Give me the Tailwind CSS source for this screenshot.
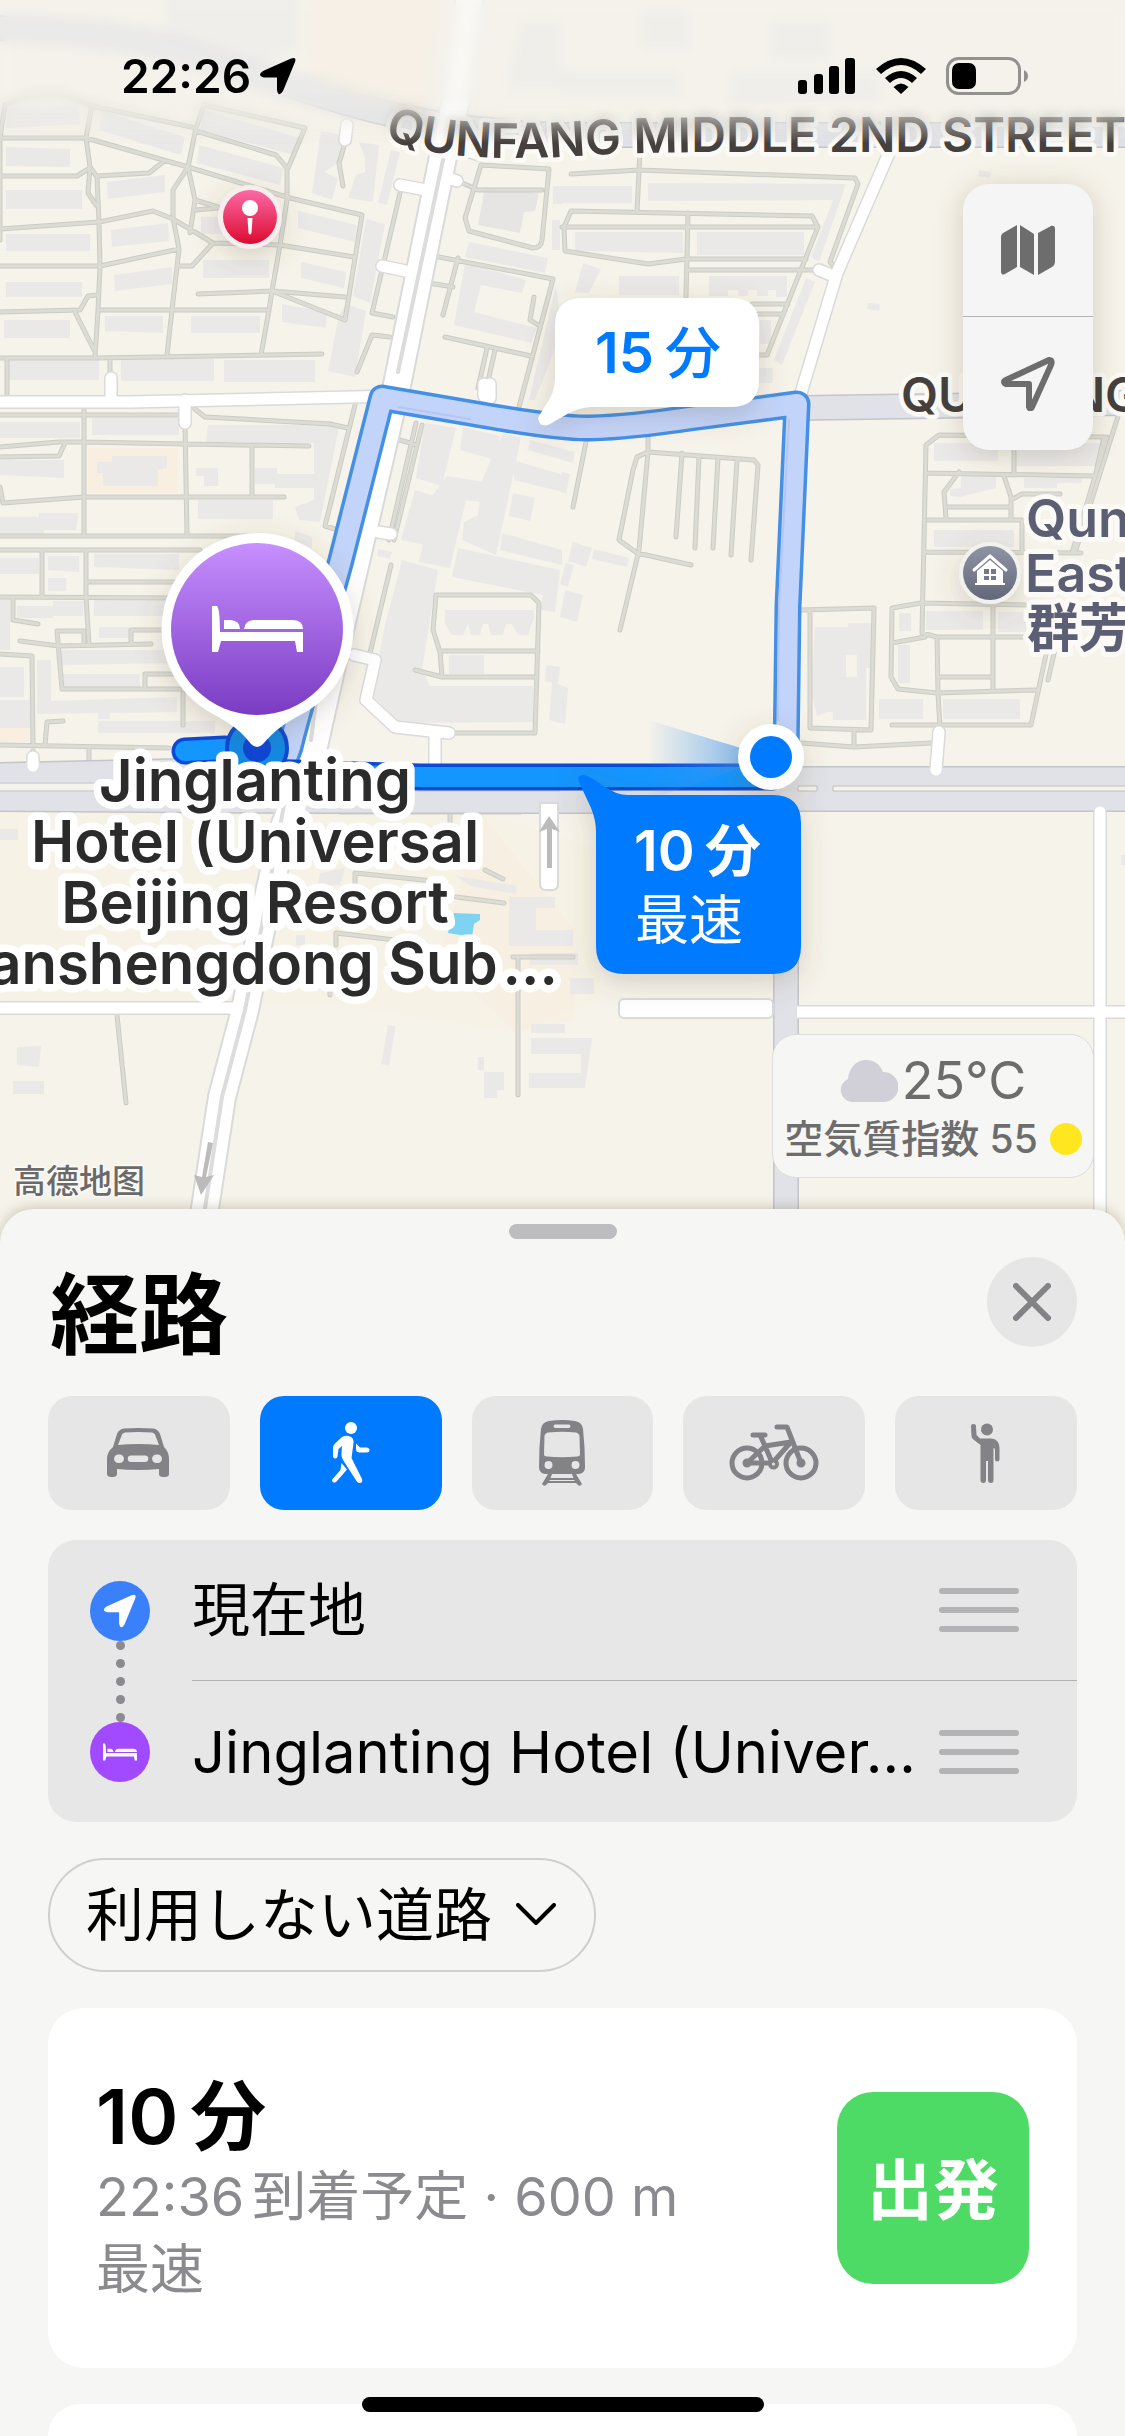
<!DOCTYPE html>
<html lang="ja">
<head>
<meta charset="utf-8">
<meta name="viewport" content="width=device-width, initial-scale=1">
<title>経路</title>
<script src="https://cdn.jsdelivr.net/npm/@tailwindcss/browser@4"></script>
</head>
<body class="bg-[#f6f6f4] font-['Inter','Noto_Sans_CJK_JP',sans-serif] text-black">
<main class="relative flex h-screen flex-col overflow-hidden">

  <!-- Map -->
  <section aria-label="地図" class="relative min-h-0 flex-1 bg-[#f6f3ea]">
    <svg class="absolute inset-x-0 top-0 h-auto w-full" viewBox="0 0 1125 1260" fill="none">
      <defs>
        <linearGradient id="purple" x1="0" y1="0" x2="0" y2="1"><stop offset="0" stop-color="#c78fff"/><stop offset="1" stop-color="#7a3bc2"/></linearGradient>
        <linearGradient id="pink" x1="0" y1="0" x2="0" y2="1"><stop offset="0" stop-color="#fc69a6"/><stop offset="1" stop-color="#dc0b30"/></linearGradient>
        <linearGradient id="slate" x1="0" y1="0" x2="0" y2="1"><stop offset="0" stop-color="#8f94a5"/><stop offset="1" stop-color="#63677a"/></linearGradient>
        <linearGradient id="beam" x1="0" y1="0" x2="1" y2="0"><stop offset="0" stop-color="#3d93ee" stop-opacity="0"/><stop offset="1" stop-color="#3d93ee" stop-opacity=".75"/></linearGradient>
        <filter id="shade" x="-40%" y="-40%" width="180%" height="180%"><feDropShadow dx="0" dy="8" stdDeviation="14" flood-color="#5a5030" flood-opacity=".22"/></filter>
        <path id="street" d="M384 138 C440 160 500 159 560 157 C620 153 650 153 700 152 L1300 152"/>
        <path id="lanes" d="M0 138H86L188 167L290 198L362 215L345 320L272 291M345 320M198 294L272 291L345 297M92 105L86 138L90 167L97 177L99 223L100 267L98 310L95 357M5 105L30 95L60 93L92 106L196 128L204 105L305 128L288 168M5 105L0 138V240M196 128L188 167L173 190V218L179 249L172 310L167 355M196 131L276 155L287 168V200L280 245L272 291L269 310L261 355M0 176H77L90 168M97 176L149 173L163 162M90 168L88 193L96 205M0 229L99 222L153 211L173 219L213 243L280 245L354 257M188 167L195 200L218 207M195 200L190 233M195 210L218 208M213 243L192 266H179M0 266H100L179 249M0 312L80 310L88 296L97 295M74 310L95 352M98 310H269M0 358H95L322 354M7 358V396M110 358V375M345 143L339 163L343 186M400 193L372 313L393 317M390 337L372 335L357 372M481 165L549 169L542 240Q541 248 533 248L469 231L465 218ZM460 182L478 190H542M434 256L553 279L519 407M458 258L443 315M429 283L453 287M445 337L531 356M487 348L478 388M495 350L486 390M534 297L530 320L538 325
          M571 174L639 170L855 178L858 184L830 262L837 270M640 150L637 212M564 227L571 211L812 216L818 227L767 355H758M562 227H818M564 227L565 251L648 264L686 259H806M688 213L686 297M688 270H820M752 304H788M758 314H783
          M0 415H180M84 410V535M185 427L187 535M0 447L59 442H84L185 444L309 446M0 457L59 456L65 443M0 487L3 503L84 497H284M252 447V495M0 536H251M0 550H200M355 405L325 526L338 530M190 405L205 417L330 424L348 428M42 550V596M86 550V597L89 645M0 597L180 598M86 582H180M13 598V620L38 624M20 641L59 646L151 644M84 643V631H57L62 689H180M145 689V674H180M131 644V630H170M0 654L32 656L33 750M63 721L47 722L45 745M0 745L169 748M89 748V765M183 693V725
          M416 423L389 540M422 425L394 540M393 438L417 445M391 565L370 653M452 733H535L539 603L531 595H436L433 630L440 652L442 677L415 670M440 651H538M442 677H537
          M587 437L573 507M648 437V452L639 550L620 630M648 452L637 457L633 470L619 540L637 553L691 565M648 452L754 460L758 465L751 560M682 453L676 537M699 457L695 548M718 458L713 548M737 460L731 555
          M801 610L874 608L871 730L810 728V611M854 730V747M801 743L854 747L932 743M1095 477L1104 437L939 435L926 445L922 633L937 637L938 693L940 728M926 473L1093 476M1014 450V473M928 520H1022M926 552L1081 553M1025 605L921 603L892 608L891 677L898 689L937 693L1036 690M1048 645L1031 725H892M937 637H1025M993 605V688M939 677H993M892 643L925 637M1119 413L1075 553M1107 437L1072 553M959 472L944 492L946 518M948 507H1011M1004 476L1011 497V520M1011 500L1022 494H1060M1022 520V552M1056 645L1048 680
          M340 812L520 812L535 803M450 812V822M355 885V873L443 882M485 870L503 879M456 897L504 903M336 945V933L395 940M117 1015L126 1103M513 957H573M518 957V1095M330 985V995"/>
        <path id="whites" d="M0 402H130L395 396M111 378V400M185 400V423M400 185L426 190M442 176L457 181M382 266L406 271M490 384V398M484 384V396M889 153L837 273L801 393M819 270L836 277M480 155L458 148M347 125L345 140M354 655L375 660L366 700L395 727L449 733M435 733V766M391 534L378 532M33 757V766M939 732L936 770M0 1008H240M797 1012H1125M1100 812V1260"/>
        <path id="avenue" d="M470 -5L456 100L443 157L397 385L340 630L312 755L283 830L262 925L245 1010L222 1097L204 1215L200 1260"/>
        <path id="grays" d="M-5 28Q120 32 180 50L330 98Q440 132 560 135H1130M800 408L1130 403M-5 775L180 771M-5 799L300 801H780M770 779H1130M770 799H1130M786 750V1260"/>
      </defs>

      <rect width="1125" height="1260" fill="#f6f3ea"/>
      <!-- land use -->
      <g fill="#f8efe0">
        <path d="M310 -5H440L425 125L310 95Z"/>
        <rect x="88" y="448" width="90" height="45"/>
        <path d="M0 812H480L600 850V1000L515 1032L340 1005L0 1000Z" opacity=".4"/>
        <path d="M480 812L575 930V1020L515 1032L440 960Z" opacity=".7"/>
        <rect x="0" y="728" width="30" height="14"/>
      </g>
      <!-- buildings -->
      <g fill="#ebe9e8">
        <path d="M165 -5H300V50L230 70L165 30ZM520 20H562V90H505ZM640 10H690V50H640ZM770 20H830V60H770ZM560 70H680V95H560ZM730 70H880V100L730 104Z" opacity=".8"/>
        <path d="M6 147L70 149V167L6 166ZM6 190H82V209H6ZM6 234H90V251H6ZM6 282H82V297H6ZM4 320H70V338H4ZM6 359H99V380H6ZM121 359H214V381H121ZM224 360H315V382H224ZM105 316H163V333L105 331ZM191 316H260V333H191ZM203 260H269V278H203ZM282 304L327 312L326 328L282 322ZM8 108L78 106L80 124L6 128ZM102 111L185 137L181 155L99 130ZM204 110L300 138L294 155L200 130ZM199 145L284 168L280 185L197 163ZM107 182L165 175V192L108 199ZM111 230L168 223L169 241L112 247ZM114 275L172 267V284L115 291ZM298 211L357 225L355 242L298 228ZM301 262L346 272L344 288L301 278ZM201 217H236V234H201ZM321 131L349 136L343 160L324 172L338 178L332 200L312 193ZM359 142L379 145L373 202L348 198L356 175L365 172V158ZM391 150L400 152L387 205L378 203ZM366 219L385 224L370 303L353 296ZM346 304L366 311L355 377L328 371L339 315Z"/>
        <path d="M469 242L548 258L545 273L465 257ZM465 263L526 280L522 293L481 285L474 312L537 328L531 343L454 325ZM553 186H562V204H553ZM552 220H560V250H552ZM556 285L562 330L535 400H529Z"/>
        <path d="M562 186H632V203H562ZM648 183L846 184L819 262L811 257L833 200L648 201ZM575 232H683V253L575 251ZM697 232H804V255H697ZM619 276H679V295H619ZM709 276H787V297H776V290H768V296H757V290H748V296H738V290H728V296H709ZM806 278L815 282L782 365L774 360ZM760 320H771V344H760ZM759 368H773V383H759ZM583 263L601 269L589 293H575ZM979 170L991 172L990 178L978 176ZM868 303L880 304L879 311L867 309Z"/>
        <path d="M0 422H80V438H0ZM92 418H179V435H92ZM208 425H314L339 427L320 522L299 520L295 507L314 500V443L206 442ZM0 460H64V478L0 475ZM112 456H167V468L158 470V486H103V473H97V462H112ZM198 500H273V519H198ZM196 468H218V486H204V476H196ZM255 468H277V474H314V488H275V484H255ZM0 517H39V513H79L76 530H44V534H0ZM0 558H39V574H0ZM48 556H79V572L48 570ZM48 578H66V591H48ZM94 554H179V570L94 567ZM94 600H180V616H94ZM17 606H53V601H83V616H53V618H17ZM0 598H10V650H0ZM99 627H129V638H99ZM60 650H180V663L60 665ZM60 674H140V687H60ZM37 660H51V701L177 697V712L110 713V719H98V713L37 714ZM0 667H24V697H0ZM0 700H32V728H0ZM98 721H215V733H98ZM295 531L312 537V548L295 543Z"/>
        <path d="M425 423L456 428L442 486L416 478ZM463 427L500 436L495 460L460 450ZM503 433L521 438L496 555L462 540L464 522L478 515L482 480ZM447 476L484 482L480 502L466 500L450 568L419 562L433 495ZM415 490L435 496L425 545L401 540ZM513 460L563 475V492L514 480ZM513 493L535 498L530 521L509 516ZM502 533L562 550V565L500 550ZM458 548L560 570L555 612L541 610L543 595L452 577ZM530 440L575 452L573 463L528 450ZM402 560L438 570L422 670L430 686H533V722L400 723L372 695L385 625ZM378 549L392 552L390 559L377 556ZM445 610H534V618L528 635H518L512 624H506L503 635H491L488 624H483L480 635H471L468 624L463 635H451L445 622ZM449 655H484V674H449ZM546 665L560 667L558 684L545 681ZM552 682L568 688L565 724L549 720Z"/>
        <path d="M562 472L570 474L566 494L560 492ZM573 542L592 548L586 567L568 561ZM594 549L629 558L627 567L592 559ZM566 563L574 565L568 587L560 584ZM565 590L583 595L577 622L560 617ZM815 627H848V623H871V668H866V720H833V712H827L817 716L811 690ZM934 443H998V461H934ZM1016 443H1100V466H1016ZM961 476H996V488L960 497L950 496V489L961 488ZM1024 478H1082V483H1057V488H1024ZM934 530H1014V547H934ZM899 613H911V631H899ZM926 611H983V630H926ZM998 612H1028V632H998ZM898 645H910V683H898ZM879 699H923V719H879ZM943 699H1020V719H943Z"/>
        <path d="M17 1047L41 1046L39 1067L17 1065ZM13 1081H44V1094H13ZM388 1025L396 1026L389 1066L381 1064ZM478 1057H484V1070H478ZM484 1072H504V1090H497V1098H484ZM531 1024H565V1033H531ZM531 1038H592L585 1088H529V1073H581V1054H531ZM509 897H555V908H536V930H573V946H509ZM320 873L345 868L340 885H318ZM456 876L517 886L516 894L470 886ZM555 930H572V945H555ZM530 953H578V965H530ZM570 978H594V994H570ZM0 829H18V840H0ZM296 935H305V945H296ZM1121 855H1125V865H1121Z"/>
        <path d="M846 655H857V677H846Z" fill="#f6f3ea"/>
      </g>
      <path d="M485 187L539 193L535 211L524 212L520 233L478 225Z" fill="#e7e5e4"/>
      <path d="M452 913L480 914V920L474 924L472 937L448 933Z" fill="#7fd3f2"/>

      <!-- roads: casing then surface -->
      <g stroke-linejoin="round" stroke-linecap="round">
        <use href="#lanes" stroke="#cbccc5" stroke-width="5"/>
        <use href="#lanes" stroke="#dcdcd5" stroke-width="3"/>
        <use href="#grays" stroke="#c3c5ca" stroke-width="26"/>
        <use href="#whites" stroke="#dadada" stroke-width="14"/>
        <use href="#avenue" stroke="#dadada" stroke-width="30"/>
        <use href="#grays" stroke="#e1e2e7" stroke-width="23"/>
        <use href="#whites" stroke="#fff" stroke-width="11"/>
        <use href="#avenue" stroke="#fff" stroke-width="26"/>
        <path d="M443 160L398 372M316 700L311 740M284 805L262 925L245 1010L222 1097L204 1215" stroke="#dcdcdc" stroke-width="4"/>
        <rect x="619" y="999" width="154" height="19" rx="5" fill="#fff" stroke="#dadada" stroke-width="2"/>
        <path d="M775 995H797V1022H775Z" fill="#e1e2e7"/>
        <path d="M540 803H558V884Q558 890 552 890H546Q540 890 540 884Z" fill="#fff" stroke="#dadada" stroke-width="2"/>
      </g>
      <path d="M798 786H817V791H798ZM833 786H1130V791H833Z" fill="#f6f3ea" stroke="#c0c0c0"/>
      <path d="M0 787H560" stroke="#f6f3ea" stroke-width="7"/><path d="M0 783H560M0 791H560" stroke="#c3c5ca"/>
      <path d="M549 816L560 832L552 829V868H547V829L539 832Z" fill="#bbb"/>
      <path d="M208 1142L213 1143L206 1177L214 1175L201 1195L194 1175L202 1177Z" fill="#bbb"/>

      <!-- alternative route -->
      <g stroke-linejoin="round" stroke-linecap="round">
        <path d="M284 762Q290 750 293 735L341 560L382 398L470 413Q560 429 590 428Q630 427 690 418L797 404L788 607L786 757" stroke="#4490e6" stroke-width="27"/>
        <path d="M284 762Q290 750 293 735L341 560L382 398L470 413Q560 429 590 428Q630 427 690 418L797 404L788 607L786 757" stroke="#c3d4fb" stroke-width="20"/>
        <path d="M398 407L470 419M789 420L779 607L778 720" stroke="#b5c6f0" stroke-width="2"/>
        <!-- fastest route -->
        <path d="M185 751L225 749L262 772L420 777H772" stroke="#0b49d6" stroke-width="27"/>
        <path d="M185 751L225 749L262 772L420 777H772" stroke="#1496ff" stroke-width="20"/>
        <path d="M771 757L648 720V800Z" fill="url(#beam)"/>
      </g>
      <circle cx="257" cy="748" r="30" fill="#118ae9" stroke="#0b49d6" stroke-width="4"/>
      <circle cx="257" cy="748" r="14" fill="#0a45dc"/>

      <!-- current position -->
      <circle cx="771" cy="757" r="33" fill="#fff" filter="url(#shade)"/>
      <circle cx="771" cy="757" r="21" fill="#007aff"/>

      <!-- route callouts -->
      <g filter="url(#shade)">
        <path d="M583 298H731Q759 298 759 326V379Q759 407 731 407H590Q578 407 562 417L548 425Q539 427 538 418Q540 414 546 405Q555 392 555 380V326Q555 298 583 298Z" fill="#fff"/>
        <path d="M579 782Q576 775 584 775Q590 776 602 785Q616 795 628 795H773Q801 795 801 823V946Q801 974 773 974H624Q596 974 596 946V832Q596 820 591 808Z" fill="#007aff"/>
      </g>
      <g font-family="Inter, 'Noto Sans CJK JP', sans-serif">
        <text y="373" font-size="56" font-weight="600" fill="#007aff"><tspan x="595">15</tspan><tspan x="665" font-weight="500">分</tspan></text>
        <g fill="#fff">
          <text y="871" font-size="56" font-weight="600"><tspan x="634">10</tspan><tspan x="705">分</tspan></text>
          <text x="635" y="940" font-size="54">最速</text>
        </g>
      </g>

      <!-- place markers -->
      <g filter="url(#shade)"><path d="M257 533A96 96 0 0 1 302 714C284 723 272 733 263 744Q257 750 251 744C243 733 231 723 213 714A96 96 0 0 1 257 533Z" fill="#fff"/></g>
      <circle cx="257" cy="629" r="86" fill="url(#purple)"/>
      <g fill="#fff"><path id="bed" d="M212 606H217Q219 609 219.500 617L220 632H303V652H297L295 641H221L218 652H212ZM224 620H231Q240 621 240 629H224ZM253 620H292Q303 620 303 629H244Q245 621 253 620Z"/></g>
      <circle cx="250" cy="217" r="32" fill="#f6eeee" filter="url(#shade)"/>
      <circle cx="250" cy="217" r="27" fill="url(#pink)"/>
      <circle cx="250" cy="208" r="8" fill="#fff"/><path d="M247.500 218H252.500L251.500 233Q250 236 248.500 233Z" fill="#fff"/>
      <circle cx="990" cy="573" r="31" fill="#f3f1ee" filter="url(#shade)"/>
      <circle cx="990" cy="573" r="27" fill="url(#slate)"/>
      <path d="M974 570L990 556L1006 570" stroke="#fff" stroke-width="3" stroke-linecap="round"/>
      <path d="M990 560L1003 571V583H1005V585H975V583H977V571Z" fill="#fff"/>
      <path d="M984 569H989V574H984ZM991 569H996V574H991ZM984 576H989V580H984ZM991 576H996V580H991Z" fill="#75798b"/>

      <!-- map labels; the hotel's lines go bottom-up so that no halo covers a descender -->
      <g font-family="Inter, 'Noto Sans CJK JP', sans-serif" stroke="#fbfaf6" stroke-linejoin="round" paint-order="stroke">
        <text font-size="48" font-weight="600" fill="#45403d" stroke-width="9"><textPath href="#street">QUNFANG MIDDLE 2ND STREET</textPath></text>
        <text x="901" y="412" font-size="48" font-weight="600" fill="#45403d" stroke-width="9">QUNFANG</text>
        <g font-size="52" font-weight="600" fill="#5c5f74" stroke-width="10">
          <text x="1027" y="647">群芳</text><text x="1025" y="592">East</text><text x="1026" y="537">Qun</text>
        </g>
        <g font-size="58" font-weight="600" fill="#2b2b2b" stroke="#fff" stroke-width="15" text-anchor="middle">
          <text x="558" y="984" text-anchor="end">anshengdong Sub&#8202;…</text><text x="255" y="923">Beijing Resort</text><text x="255" y="862">Hotel (Universal</text><text x="255" y="801">Jinglanting</text>
        </g>
        <text x="13" y="1193" font-size="33" font-weight="500" fill="#6a6a6a" stroke-width="3">高德地图</text>
      </g>
    </svg>

    <!-- blurred strip behind the status bar -->
    <div class="absolute inset-x-0 top-0 h-36 bg-[#f4f2ec]/50 backdrop-blur-[6px] [mask-image:linear-gradient(to_bottom,black_65%,transparent)]"></div>

    <div class="relative flex items-center justify-between pt-[46px] pr-[96px] pl-[121px]">
      <div class="flex h-[60px] items-center gap-2">
        <time class="text-[46px] leading-[60px] font-semibold">22:26</time>
        <svg class="h-[38px] w-[38px]" viewBox="0 0 38 38" role="img" aria-label="位置情報"><path d="M32 1.500Q38-.5 36 5L24 34Q19.500 41 18 33V20.500H5Q-2.500 18.500 4 14Z"/></svg>
      </div>
      <div class="flex items-center gap-5">
        <svg class="h-9 w-[58px]" viewBox="0 0 58 36" role="img" aria-label="電波"><rect y="22" width="9" height="14" rx="3"/><rect x="16" y="16" width="9" height="20" rx="3"/><rect x="31" y="8" width="10" height="28" rx="3"/><rect x="47" width="10" height="36" rx="3"/></svg>
        <svg class="h-9 w-[50px]" viewBox="0 0 50 36" role="img" aria-label="Wi-Fi"><path d="M0 11Q25-11 50 11L45 16Q25-2 5 16ZM9 20Q25 6 41 20L36 25Q25 15 14 25ZM17.500 29Q25 22 32.500 29L25 36Z"/></svg>
        <svg class="h-[38px] w-[83px]" viewBox="0 0 83 38" role="img" aria-label="バッテリー"><rect x="1.500" y="1.500" width="72" height="35" rx="11" fill="none" stroke="#92918e" stroke-width="3"/><rect x="6" y="6" width="24" height="26" rx="7"/><path d="M78 13Q82 15 82 19T78 25Z" fill="#92918e"/></svg>
      </div>
    </div>

    <!-- map controls -->
    <div class="absolute top-[184px] right-8 flex w-[130px] flex-col divide-y divide-[#b4b4b4] rounded-[26px] bg-[#f5f5f5] shadow-[0_4px_28px_rgba(80,70,40,0.22)]">
      <button type="button" aria-label="地図の種類" class="grid h-[133px] place-items-center">
        <svg class="h-[50px] w-[54px]" viewBox="0 0 54 50" fill="#6d6d6d"><path d="M0 12Q0 9 3 7.500L16 0V42L4 49Q0 51 0 46ZM19 0L33 9V50L19 42ZM37 8L50 1Q54 0 54 4V37Q54 40 51 42L37 50Z"/></svg>
      </button>
      <button type="button" aria-label="現在地へ移動" class="grid h-[133px] place-items-center">
        <svg class="h-[54px] w-[54px]" viewBox="0 0 54 54" fill="none" stroke="#6d6d6d" stroke-width="6" stroke-linejoin="round"><path d="M48 3Q52 3 50 8L31 50Q29 53 28 50V27H5Q1 25 5 23Z"/></svg>
      </button>
    </div>

    <!-- weather -->
    <div class="absolute right-[31px] bottom-[31px] flex h-[144px] w-[322px] flex-col items-center justify-end rounded-3xl border border-[#dddddb] bg-[#f6f6f4] pb-[10px] text-[#6d6d6d]">
      <div class="flex items-center gap-1">
        <svg class="h-[42px] w-[58px]" viewBox="0 0 58 42" fill="#d1d0d8"><path d="M12 42A12 12 0 0 1 8 19C9 8 16 0 26 0C34 0 40 4 43 12A15 15 0 0 1 44 42Z"/></svg>
        <span class="text-[52px] leading-[60px]">25°C</span>
      </div>
      <div class="flex items-center gap-3 text-[39px] leading-[56px] font-medium">
        <span>空気質指数 55</span><span class="size-8 rounded-full bg-[#ffe61f]"></span>
      </div>
    </div>
  </section>

  <!-- Route sheet -->
  <section class="relative flex flex-col rounded-t-[34px] bg-[#f6f6f4] px-12 pt-[15px] shadow-[0_-2px_12px_rgba(80,70,40,0.25)]">
    <div class="h-[15px] w-[108px] self-center rounded-full bg-[#bdbdbf]"></div>
    <header class="mt-[18px] flex items-start justify-between">
      <h1 class="pl-[2px] text-[89px] leading-[116px] font-bold">経路</h1>
      <button type="button" aria-label="閉じる" class="grid size-[90px] place-items-center rounded-full bg-[#e6e6e6]">
        <svg class="size-[38px]" viewBox="0 0 38 38" stroke="#828287" stroke-width="6" stroke-linecap="round"><path d="M3 3L35 35M35 3L3 35"/></svg>
      </button>
    </header>

    <nav aria-label="移動手段" class="mt-[23px] grid grid-cols-5 gap-[30px]">
      <button type="button" aria-label="車" class="grid h-[114px] place-items-center rounded-3xl bg-[#e6e6e6]">
        <svg class="h-[50px] w-[63px]" viewBox="0 0 63 50" fill="#828287" fill-rule="evenodd"><path d="M6 19L10 6Q12 1 17 .5Q31-.5 46 .5Q51 1 53 6L57 19Q62 24 62 31V46Q62 49 58 49H56Q52 49 52 46V41Q31 43 10 41V46Q10 49 6 49H4Q0 49 0 46V31Q0 24 6 19ZM11 17Q31 15 52 17L48 6.500Q47 5 45 4.500Q31 3.500 18 4.500Q16 5 15 6.500ZM12 26.500A4.300 4.300 0 1 0 12 35A4.300 4.300 0 1 0 12 26.500ZM50 26.500A4.300 4.300 0 1 0 50 35A4.300 4.300 0 1 0 50 26.500ZM24 27.500A3.200 3.200 0 0 0 24 34H38A3.200 3.200 0 0 0 38 27.500Z"/></svg>
      </button>
      <button type="button" aria-label="徒歩" aria-pressed="true" class="grid h-[114px] place-items-center rounded-3xl bg-[#007aff]">
        <svg class="h-[62px] w-[38px]" viewBox="0 0 38 62" fill="#fff"><circle cx="19" cy="6" r="6"/><path d="M10 15Q14 13 18 14.500Q22 16 21.500 21L19.500 36L30 57Q31 61 28 61Q26 61.500 24.500 59L11 38Q9 35 9.500 31L10 24L6.500 27L5.500 34.500Q5 37 2.500 36.500Q.5 36 1 33V25.500Q1.500 22.500 4 20.500ZM24 21.500L28 25.500L34.500 25.500Q37.500 26 37.500 28Q37.500 30.500 34.500 30.500H27Q24 30 24 27ZM9.500 41L15 47.500L4.500 59.500Q2.500 61.500 .8 60Q-.8 58.500 1 56.500L8.500 48Z"/></svg>
      </button>
      <button type="button" aria-label="交通機関" class="grid h-[114px] place-items-center rounded-3xl bg-[#e6e6e6]">
        <svg class="h-[66px] w-[46px]" viewBox="0 0 46 66" fill="#828287" fill-rule="evenodd"><path d="M2 9Q3 2 10 1Q23-1 36 1Q43 2 44 9Q46 27 46 47Q46 53 40 54H37L43 64Q41 67 39 65L37 63H9L7 65Q5 67 3 64L9 54H6Q0 53 0 47Q0 27 2 9ZM16 4.500Q13 6 16 8H30Q33 6 30 4.500ZM9 12.500Q6 13 5.500 16L5 34Q5 36.500 8 36.500Q23 38 38 36.500Q41 36.500 41 34L40.500 16Q40 13 37 12.500Q23 11 9 12.500ZM9.500 41A4 4 0 1 0 9.500 49A4 4 0 1 0 9.500 41ZM36.500 41A4 4 0 1 0 36.500 49A4 4 0 1 0 36.500 41ZM13 54L11.500 58H34.500L33 54ZM11 60L10 61H36L35 60Z"/></svg>
      </button>
      <button type="button" aria-label="自転車" class="grid h-[114px] place-items-center rounded-3xl bg-[#e6e6e6]">
        <svg class="h-[58px] w-[90px]" viewBox="0 0 90 58" fill="none" stroke="#828287" stroke-width="5" stroke-linecap="round" stroke-linejoin="round"><circle cx="18" cy="39" r="15"/><circle cx="72" cy="39" r="15"/><path d="M18 39L36 22L62 18L46 36M36 22L42 36M36 22L31 11M24 11H36M18 39H40M48 3H58L72 39"/><circle cx="44.500" cy="40" r="3.500" stroke-width="4"/><circle cx="18" cy="39" r="2"/><circle cx="72" cy="39" r="2"/></svg>
      </button>
      <button type="button" aria-label="配車サービス" class="grid h-[114px] place-items-center rounded-3xl bg-[#e6e6e6]">
        <svg class="h-[60px] w-[30px]" viewBox="0 0 30 60" fill="#828287"><circle cx="16" cy="6.500" r="6"/><path d="M0 3Q0 1 2.500 1Q5 1 5 3L5.500 12L9 15.500H20Q28.500 16 28.500 25V36Q28.500 38.500 26 38.500Q24 38.500 24 36V27Q24 25 22.500 25V57Q22.500 60 20 60Q17 60 17 57V38H15V57Q15 60 12.500 60Q9.500 60 9.500 57V22L2.500 16.500Q.5 15 .5 13Z"/></svg>
      </button>
    </nav>

    <ol class="relative mt-[30px] rounded-[28px] bg-[#e7e7e7]">
      <li class="flex h-[141px] items-center pl-[42px]">
        <span class="grid size-[60px] shrink-0 place-items-center rounded-full bg-[#3a80fb]"><svg class="size-[34px]" viewBox="0 0 38 38" fill="#fff"><path d="M32 1.500Q38-.5 36 5L24 34Q19.500 41 18 33V20.500H5Q-2.500 18.500 4 14Z"/></svg></span>
        <div class="ml-[42px] flex h-full min-w-0 flex-1 items-center border-b border-[#b2b2b4] pr-[58px]">
          <span class="min-w-0 flex-1 truncate text-[58px] leading-[84px]">現在地</span>
          <button type="button" aria-label="現在地を並べ替え" class="flex w-20 shrink-0 flex-col gap-[13px]"><span class="h-[6px] rounded-full bg-[#b3b3b5]"></span><span class="h-[6px] rounded-full bg-[#b3b3b5]"></span><span class="h-[6px] rounded-full bg-[#b3b3b5]"></span></button>
        </div>
      </li>
      <li class="flex h-[141px] items-center pl-[42px]">
        <span class="grid size-[60px] shrink-0 place-items-center rounded-full bg-[#a14aff]"><svg class="h-[18px] w-[34px]" viewBox="212 606 91 46" fill="#fff"><use href="#bed"/></svg></span>
        <div class="ml-[42px] flex h-full min-w-0 flex-1 items-center pr-[58px]">
          <span class="min-w-0 flex-1 truncate text-[58px] leading-[84px]">Jinglanting Hotel (Univer…</span>
          <button type="button" aria-label="目的地を並べ替え" class="flex w-20 shrink-0 flex-col gap-[13px]"><span class="h-[6px] rounded-full bg-[#b3b3b5]"></span><span class="h-[6px] rounded-full bg-[#b3b3b5]"></span><span class="h-[6px] rounded-full bg-[#b3b3b5]"></span></button>
        </div>
      </li>
      <li aria-hidden="true" class="absolute top-[101px] left-[68px] flex flex-col gap-[9px]"><span class="size-[9px] rounded-full bg-[#8a8a8f]"></span><span class="size-[9px] rounded-full bg-[#8a8a8f]"></span><span class="size-[9px] rounded-full bg-[#8a8a8f]"></span><span class="size-[9px] rounded-full bg-[#8a8a8f]"></span><span class="size-[9px] rounded-full bg-[#8a8a8f]"></span></li>
    </ol>

    <button type="button" class="mt-9 flex h-[114px] items-center gap-6 self-start rounded-full border-2 border-[#cfcfd1] pr-[38px] pl-9 text-[58px] leading-[84px]">
      利用しない道路
      <svg class="h-[24px] w-[40px]" viewBox="0 0 40 24" fill="none" stroke="#000" stroke-width="4" stroke-linecap="round" stroke-linejoin="round"><path d="M2 2L20 20L38 2"/></svg>
    </button>

    <article class="mt-9 flex h-[360px] items-center justify-between rounded-[36px] bg-white px-12">
      <div class="pt-[2px]">
        <h2 class="flex items-baseline gap-3 text-[76px] leading-[88px] font-semibold">10<span>分</span></h2>
        <p class="flex items-baseline gap-2 text-[54px] leading-[73px] text-[#8a8a8f]">22:36<span>到着予定 · 600 m</span></p>
        <p class="text-[54px] leading-[73px] text-[#8a8a8f]">最速</p>
      </div>
      <button type="button" class="size-[192px] shrink-0 rounded-[36px] bg-[#4ddb65] pt-1 text-[66px] font-bold text-white">出発</button>
    </article>
    <div class="mt-9 h-8 rounded-t-[36px] bg-white"></div>
  </section>

  <div class="absolute bottom-6 left-1/2 h-[15px] w-[402px] -translate-x-1/2 rounded-full bg-black"></div>
</main>
</body>
</html>
